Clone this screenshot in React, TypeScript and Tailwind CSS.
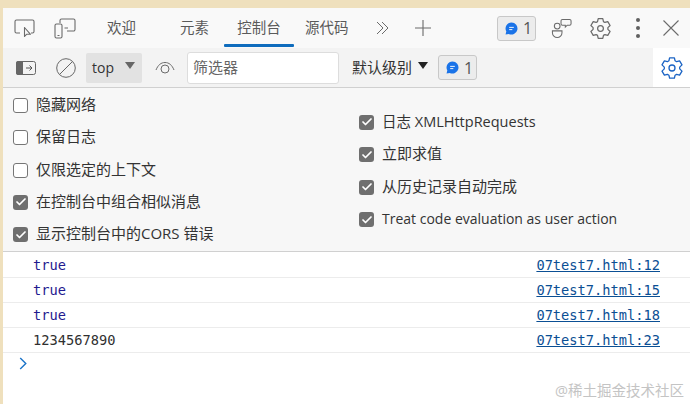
import { Check } from 'lucide-react'

const FONT = "font-['Open_Sans','Noto_Sans_CJK_SC',sans-serif]"

// ─── Icons ────────────────────────────────────────────────────────────────────

function Gear({ className }: { className: string }) {
  return (
    <svg viewBox="0 0 24 24" fill="none" stroke="currentColor" strokeWidth="1.3" strokeLinejoin="round" className={className}>
      <path d="M9.6 2.6h4.8l.7 3 1.5.9 3-.9 2.4 4.1-2.3 2.2v1.8l2.3 2.2-2.4 4.1-3-.9-1.5.9-.7 3H9.6l-.7-3-1.5-.9-3 .9L2 15.9l2.3-2.2v-1.8L2 9.7l2.4-4.1 3 .9 1.5-.9z" transform="translate(0 -.8)" />
      <circle cx="12" cy="12" r="3" />
    </svg>
  )
}

function IssueBadge() {
  return (
    <div className="flex h-[25px] w-[39px] items-center gap-[5px] rounded-[3px] border border-[#c8c8c8] bg-[#ececec] pl-[7px]">
      <svg viewBox="0 0 14 14" className="h-[13px] w-[13px]">
        <path d="M7 .5a6.5 6.5 0 1 1-3 12.3L.6 13.5l.8-3.3A6.5 6.5 0 0 1 7 .5z" fill="#1a73e8" />
        <path d="M4.5 5.8h5M4.5 8.2h3.4" stroke="#fff" strokeWidth="1" />
      </svg>
      <span className="text-[16px] leading-none text-[#555]">1</span>
    </div>
  )
}

// ─── Bars ─────────────────────────────────────────────────────────────────────

function TabBar() {
  return (
    <div className="flex h-[40px] items-center bg-[#f9f9f9] text-[14.500px] text-[#5a5a5a]">
      <svg viewBox="0 0 22 20" fill="none" stroke="#6b6b6b" strokeWidth="1.1" className="ml-[11px] h-[20px] w-[22px]">
        <path d="M6 15H2.5A1.5 1.5 0 0 1 1 13.500V3.500A1.500 1.500 0 0 1 2.500 2h16A1.500 1.500 0 0 1 20 3.500v10a1.500 1.500 0 0 1-1.500 1.500H17" />
        <path d="M10.500 9.500v9l2-2.200h4z" strokeLinejoin="round" />
      </svg>
      <svg viewBox="0 0 22 22" fill="none" stroke="#6b6b6b" strokeWidth="1.1" className="ml-[18px] h-[22px] w-[22px]">
        <path d="M6 6V3.500A1.500 1.500 0 0 1 7.500 2h12A1.500 1.500 0 0 1 21 3.500v9a1.500 1.500 0 0 1-1.500 1.500H13" />
        <rect x="1" y="7" width="7" height="14" rx="1.500" />
        <path d="M3.500 18.500h2M10.500 11H14" />
      </svg>
      <span className="ml-[31px]">欢迎</span>
      <span className="ml-[44px]">元素</span>
      <div className="relative ml-[15px] flex h-full w-[70px] items-center justify-center">
        <span>控制台</span>
        <div className="absolute bottom-[1px] left-0 h-[3px] w-[70px] rounded-[1px] bg-[#0f6cbd]" />
      </div>
      <span className="ml-[11px]">源代码</span>
      <svg viewBox="0 0 16 16" fill="none" stroke="#6b6b6b" strokeWidth="1" className="ml-[26.500px] h-[16px] w-[16px]">
        <path d="M2 2l6 6-6 6M7 2l6 6-6 6" />
      </svg>
      <svg viewBox="0 0 18 18" fill="none" stroke="#6b6b6b" strokeWidth="1.1" className="ml-[23px] h-[18px] w-[18px]">
        <path d="M9 1v16M1 9h16" />
      </svg>
      <div className="ml-[65px]">
        <IssueBadge />
      </div>
      <svg viewBox="0 0 22 22" fill="none" stroke="#6b6b6b" strokeWidth="1.1" className="ml-[15px] h-[21px] w-[21px]">
        <circle cx="6.500" cy="8.500" r="3" />
        <path d="M1.500 13.500h10v2a5 5 0 0 1-10 0z" />
        <path d="M12 1.500h7.500a1.500 1.500 0 0 1 1.500 1.500v3a1.500 1.500 0 0 1-1.500 1.500h-2.500l-2 2v-2H12a1.500 1.500 0 0 1-1.500-1.500V3A1.500 1.500 0 0 1 12 1.500z" />
      </svg>
      <Gear className="ml-[17px] h-[23px] w-[23px] text-[#6b6b6b]" />
      <div className="ml-[24px] flex flex-col gap-[4.500px]">
        <span className="h-[3.500px] w-[3.500px] rounded-full bg-[#606060]" />
        <span className="h-[3.500px] w-[3.500px] rounded-full bg-[#606060]" />
        <span className="h-[3.500px] w-[3.500px] rounded-full bg-[#606060]" />
      </div>
      <svg viewBox="0 0 16 16" fill="none" stroke="#6b6b6b" strokeWidth="1.1" className="ml-[23px] h-[16px] w-[16px]">
        <path d="M.5.500l15 15M15.500.500l-15 15" />
      </svg>
    </div>
  )
}

function FilterBar() {
  return (
    <div className="flex h-[40px] items-center border-b border-[#d0d0d0] bg-[#f3f3f3]">
      <svg viewBox="0 0 20 14" className="ml-[13px] h-[14px] w-[20px]">
        <rect x=".5" y=".5" width="19" height="13" rx="2" fill="#f3f3f3" stroke="#666" />
        <path d="M2 0h5v14H2a2 2 0 0 1-2-2V2a2 2 0 0 1 2-2z" fill="#666" />
        <path d="M10 7h6M13.500 4.500L16 7l-2.500 2.500" fill="none" stroke="#555" />
      </svg>
      <svg viewBox="0 0 20 20" fill="none" stroke="#666" strokeWidth="1" className="ml-[20px] h-[20px] w-[20px]">
        <circle cx="10" cy="10" r="9.300" />
        <path d="M3.500 16.500l13-13" />
      </svg>
      <div className="ml-[10px] flex h-[30px] w-[56px] items-center rounded-[2px] bg-[#e2e2e2] pl-[6px]">
        <span className="text-[14px] text-[#333]">top</span>
        <span className="ml-[11px] mb-[4px] h-0 w-0 border-x-[5px] border-t-[7px] border-x-transparent border-t-[#666]" />
      </div>
      <svg viewBox="0 0 20 14" fill="none" stroke="#6b6b6b" strokeWidth="1" className="ml-[13px] h-[14px] w-[20px]">
        <path d="M1 9c2-5 5-7.500 9-7.500s7 2.500 9 7.500" />
        <circle cx="10" cy="8" r="4" />
      </svg>
      <div className="ml-[12px] flex h-[32px] w-[152px] items-center rounded-[3px] border border-[#dddddd] bg-white pl-[5px] text-[15px] text-[#666]">
        筛选器
      </div>
      <span className="ml-[13px] text-[15px] text-[#333]">默认级别</span>
      <span className="ml-[6px] mb-[4px] h-0 w-0 border-x-[5.500px] border-t-[7px] border-x-transparent border-t-[#222]" />
      <div className="ml-[10px]">
        <IssueBadge />
      </div>
      <div className="ml-auto flex h-[39px] w-[37px] items-center justify-center bg-white">
        <Gear className="h-[24px] w-[24px] text-[#1a63c4]" />
      </div>
    </div>
  )
}

// ─── Settings panel ───────────────────────────────────────────────────────────

function Option({ label, checked, size }: { label: string; checked?: boolean; size: string }) {
  return (
    <div className="flex h-[32.500px] items-center gap-[8px]">
      {checked ? (
        <span className="flex h-[15px] w-[15px] items-center justify-center rounded-[3px] bg-[#6f6f6f]">
          <Check className="h-[12px] w-[12px] text-white" strokeWidth={3.500} />
        </span>
      ) : (
        <span className="h-[15px] w-[15px] rounded-[3px] border border-[#767676] bg-white" />
      )}
      <span className={`leading-none text-[#333] ${size}`}>{label}</span>
    </div>
  )
}

function SettingsPanel() {
  return (
    <div className="flex h-[164px] border-b border-[#d0d0d0] bg-[#f7f7f7]">
      <div className="flex w-[356px] flex-col pl-[10px] pt-[1px]">
        <Option size="pb-[2px] text-[15px]" label="隐藏网络" />
        <Option size="pb-[2px] text-[15px]" label="保留日志" />
        <Option size="pb-[2px] text-[15px]" label="仅限选定的上下文" />
        <Option size="pb-[2px] text-[15px]" label="在控制台中组合相似消息" checked />
        <Option size="pb-[2px] text-[15px]" label="显示控制台中的CORS 错误" checked />
      </div>
      <div className="flex flex-col pt-[18px]">
        <Option size="text-[14.500px]" label="日志 XMLHttpRequests" checked />
        <Option size="pb-[2px] text-[15px]" label="立即求值" checked />
        <Option size="pb-[2px] text-[15px]" label="从历史记录自动完成" checked />
        <Option size="pb-[2px] text-[14px]" label="Treat code evaluation as user action" checked />
      </div>
    </div>
  )
}

// ─── Console output ───────────────────────────────────────────────────────────

const LOGS = [
  { value: 'true', source: '07test7.html:12', color: 'text-[#1f1a8f]' },
  { value: 'true', source: '07test7.html:15', color: 'text-[#1f1a8f]' },
  { value: 'true', source: '07test7.html:18', color: 'text-[#1f1a8f]' },
  { value: '1234567890', source: '07test7.html:23', color: 'text-[#303030]' },
]

function ConsoleOutput() {
  return (
    <div className="relative flex-1 bg-white pt-[1px] font-['DejaVu_Sans_Mono',monospace] text-[13.700px]">
      {LOGS.map((log) => (
        <div key={log.source} className="flex h-[25px] items-center justify-between border-b border-[#ececec] px-[30px] last:h-[24px]">
          <span className={log.color}>{log.value}</span>
          <span className="text-[#0b4f94] underline">{log.source}</span>
        </div>
      ))}
      <svg viewBox="0 0 8 14" fill="none" stroke="#1a73c8" strokeWidth="1.500" className="ml-[16px] mt-[4px] h-[13px] w-[8px]">
        <path d="M1 1l6 6-6 6" />
      </svg>
      <span className={`absolute bottom-[2px] right-[6px] text-[14.500px] text-[#c4c4c4] ${FONT}`}>@稀土掘金技术社区</span>
    </div>
  )
}

export default function App() {
  return (
    <div className={`flex h-[404px] w-[690px] flex-col overflow-hidden bg-[#efe0bd] pt-[8px] ${FONT}`}>
      <div className="ml-[3px] flex flex-1 flex-col overflow-hidden">
        <TabBar />
        <FilterBar />
        <SettingsPanel />
        <ConsoleOutput />
      </div>
    </div>
  )
}
